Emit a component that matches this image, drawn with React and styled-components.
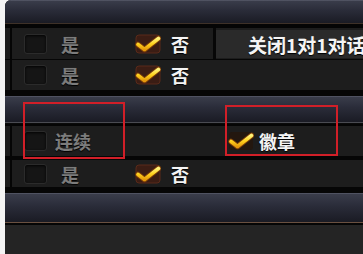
import React from 'react';
import styled, { createGlobalStyle } from 'styled-components';

const GlobalStyle = createGlobalStyle`
  html, body {
    margin: 0;
    padding: 0;
    background: #f4f4f4;
  }
  body {
    font-family: "Noto Sans CJK SC", "Noto Sans", sans-serif;
  }
`

const Page = styled.div`
  width: 363px;
  height: 254px;
  padding-left: 5px;
  box-sizing: border-box;
  overflow: hidden;
`

const Panel = styled.div`
  position: relative;
  width: 358px;
  height: 254px;
  background: #080808;
  border-top-left-radius: 6px;
  overflow: hidden;
  display: flex;
  flex-direction: column;
`

const Header = styled.div`
  height: ${p => p.$h}px;
  flex-shrink: 0;
  background: linear-gradient(to bottom, #3b3e4c 0%, #2a2c39 45%, #1a1b24 100%);
  box-shadow: inset 0 1px 0 rgba(120, 124, 140, 0.35);
  border-bottom: ${p => p.$line ? '1px solid #4a4b52' : 'none'};
  box-sizing: border-box;
`

const HeaderSep = styled.div`
  height: ${p => p.$h}px;
  flex-shrink: 0;
  background: #050505;
  border-top: 1px solid ${p => p.$tone || '#3e3128'};
  box-sizing: border-box;
`

const Gap = styled.div`
  height: ${p => p.$h}px;
  flex-shrink: 0;
  background: #060606;
`

const Row = styled.div`
  height: ${p => p.$h}px;
  flex-shrink: 0;
  display: flex;
  background: #1d1d1d;
`

const Gutter = styled.div`
  width: 5px;
  background: #1c1c1c;
  border-right: 2px solid #050505;
`

const Content = styled.div`
  flex: 1;
  display: flex;
  align-items: center;
  padding-left: 12px;
  min-width: 0;
`

const Option = styled.div`
  display: flex;
  align-items: center;
  width: ${p => p.$w}px;
  margin-left: ${p => p.$ml || 0}px;
  gap: ${p => p.$gap}px;
  flex-shrink: 0;
`

const EmptyBox = styled.div`
  width: 23px;
  height: 20px;
  box-sizing: border-box;
  border-radius: 3px;
  background: #151515;
  border: 1px solid #2b2b2b;
  box-shadow: inset 0 1px 3px rgba(0, 0, 0, 0.9);
  flex-shrink: 0;
`

const Label = styled.span`
  font-size: ${p => p.$size || 18}px;
  font-weight: 700;
  line-height: 1;
  color: ${p => p.$dim ? '#7c7c7c' : '#f4f4f4'};
  text-shadow: 0 1px 1px #000, 0 0 1px rgba(255, 255, 255, 0.2);
  white-space: nowrap;
`

const Divider = styled.div`
  width: 3px;
  align-self: stretch;
  background: #070707;
  flex-shrink: 0;
`

const TextCell = styled.div`
  flex: 1;
  align-self: stretch;
  margin: 2px 0 1px;
  background: #2a2a2a;
  display: flex;
  align-items: center;
  padding-left: 32px;
  overflow: hidden;
`

const Filler = styled.div`
  flex: 1;
  background: #242424;
`

const Mark = styled.div`
  position: absolute;
  left: ${p => p.$x}px;
  top: ${p => p.$y}px;
  width: ${p => p.$w}px;
  height: ${p => p.$h}px;
  border: 2px solid #d11f28;
  box-sizing: border-box;
  pointer-events: none;
`

const Check = ({ bg = true }) => (
  <svg width="26" height="20" viewBox="0 0 26 20">
    <defs>
      <linearGradient id="chk" x1="0" y1="0" x2="0" y2="1">
        <stop offset="0" stopColor="#fff27a" />
        <stop offset="0.5" stopColor="#ffd21c" />
        <stop offset="1" stopColor="#e59a0c" />
      </linearGradient>
    </defs>
    {bg && <rect x="1" y="1" width="24" height="18" rx="3" fill="#3b1d14" stroke="#5a2a1a" strokeWidth="1" />}
    {!bg && <rect x="1" y="1" width="24" height="18" rx="3" fill="#23170f" />}
    <path d="M3 10.5 L9.5 15.5 L23.5 4.5" fill="none" stroke="#7a3c08" strokeWidth="5.5" strokeLinecap="round" strokeLinejoin="round" />
    <path d="M3 10.5 L9.5 15.5 L23.5 4.5" fill="none" stroke="url(#chk)" strokeWidth="3.6" strokeLinecap="round" strokeLinejoin="round" />
  </svg>
)

const YesNoRow = ({ h, note }) => (
  <Row $h={h}>
    <Gutter />
    <Content>
      <Option $w={111} $gap={14}>
        <EmptyBox />
        <Label $dim>是</Label>
      </Option>
      <Option $w={78} $gap={10}>
        <Check />
        <Label>否</Label>
      </Option>
      {note && (
        <>
          <Divider />
          <TextCell>
            <Label $size={19}>{note}</Label>
          </TextCell>
        </>
      )}
    </Content>
  </Row>
)

export default function App() {
  return (
    <Page>
      <GlobalStyle />
      <Panel>
        <Header $h={23} />
        <HeaderSep $h={5} />
        <YesNoRow h={31} note="关闭1对1对话" />
        <Gap $h={1} />
        <YesNoRow h={30} />
        <Gap $h={6} />
        <Header $h={27} $line />
        <HeaderSep $h={3} $tone="#0a0a0a" />
        <Row $h={30}>
          <Gutter />
          <Content>
            <Option $w={111} $gap={8}>
              <EmptyBox />
              <Label $dim>连续</Label>
            </Option>
            <Option $w={90} $gap={5} $ml={93}>
              <Check bg={false} />
              <Label>徽章</Label>
            </Option>
          </Content>
        </Row>
        <Gap $h={4} />
        <YesNoRow h={27} />
        <Gap $h={6} />
        <Header $h={29} />
        <HeaderSep $h={3} $tone="#6a5040" />
        <Filler />
        <Mark $x={18} $y={102} $w={102} $h={57} />
        <Mark $x={220} $y={105} $w={113} $h={51} />
      </Panel>
    </Page>
  );
}
